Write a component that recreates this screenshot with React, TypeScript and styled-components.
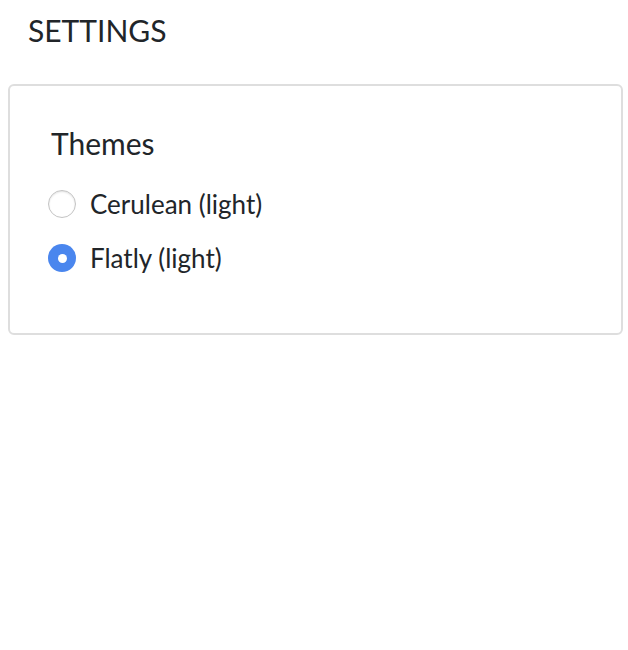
import React from 'react'
import styled, { createGlobalStyle } from 'styled-components'

const GlobalStyle = createGlobalStyle`
  html, body {
    margin: 0;
    padding: 0;
    background: #fff;
  }
  body {
    font-family: Lato, "Noto Sans", sans-serif;
    color: #212529;
  }
`

const Page = styled.div`
  padding: 12px 5px 0 8px;
`

const Title = styled.h1`
  margin: 0 0 36px 20px;
  font-size: 30px;
  font-weight: 400;
  line-height: 36px;
`

const Card = styled.div`
  border: 2px solid #dedede;
  border-radius: 6px;
  padding: 39px 38px 57px;
`

const SectionTitle = styled.h2`
  margin: 0 0 25px 3px;
  font-size: 30px;
  font-weight: 400;
  line-height: 36px;
`

const Options = styled.div`
  display: flex;
  flex-direction: column;
  gap: 18px;
`

const Option = styled.label`
  display: flex;
  align-items: center;
  gap: 14px;
  font-size: 26px;
  line-height: 36px;
  cursor: pointer;
`

const Radio = styled.span<{ $checked?: boolean }>`
  box-sizing: border-box;
  width: 28px;
  height: 28px;
  border-radius: 50%;
  flex-shrink: 0;
  display: flex;
  align-items: center;
  justify-content: center;
  background: ${(p) => (p.$checked ? '#4a86ee' : '#fff')};
  border: ${(p) => (p.$checked ? 'none' : '1.5px solid #c4c4c4')};
  box-shadow: ${(p) => (p.$checked ? 'none' : 'inset 0 1px 2px rgba(0,0,0,0.12)')};

  &::after {
    content: '';
    display: ${(p) => (p.$checked ? 'block' : 'none')};
    width: 9px;
    height: 9px;
    border-radius: 50%;
    background: #fff;
  }
`

const themes = [
  { id: 'cerulean', label: 'Cerulean (light)' },
  { id: 'flatly', label: 'Flatly (light)' },
]

const App: React.FC = () => {
  const [theme, setTheme] = React.useState('flatly')

  return (
    <Page>
      <GlobalStyle />
      <Title>SETTINGS</Title>
      <Card>
        <SectionTitle>Themes</SectionTitle>
        <Options>
          {themes.map((t) => (
            <Option key={t.id} onClick={() => setTheme(t.id)}>
              <Radio $checked={theme === t.id} />
              {t.label}
            </Option>
          ))}
        </Options>
      </Card>
    </Page>
  )
}

export default App
